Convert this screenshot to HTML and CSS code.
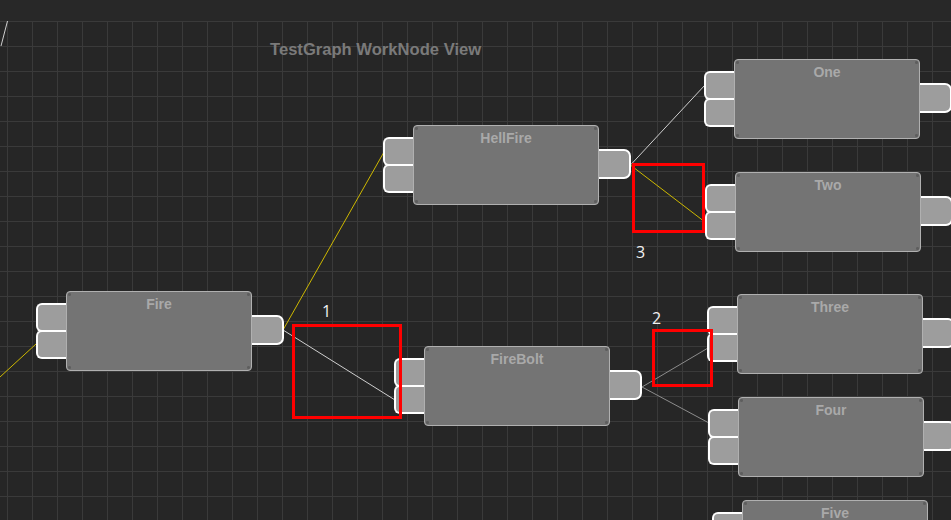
FILE: index.html
```html
<!DOCTYPE html>
<html>
<head>
<meta charset="utf-8">
<link rel="stylesheet" href="styles.css">
</head>
<body>
<div class="topbar"></div>
<div class="canvas">
  <div class="graph-title">TestGraph WorkNode View</div>
  <svg class="wires" width="951" height="499" viewBox="0 0 951 499">
    <line class="w-white" x1="1" y1="25" x2="7.5" y2="0"/>
    <line class="w-yellow" x1="0" y1="356" x2="36" y2="323"/>
    <line class="w-yellow" x1="283" y1="309" x2="384" y2="131"/>
    <line class="w-white" x1="283" y1="309" x2="395" y2="379"/>
    <line class="w-white" x1="631" y1="143.5" x2="705" y2="64"/>
    <line class="w-yellow" x1="631" y1="144.5" x2="705" y2="201"/>
    <line class="w-grey" x1="642" y1="366" x2="708" y2="327"/>
    <line class="w-grey" x1="642" y1="366" x2="709" y2="402"/>
  </svg>

  <div class="node" style="left:36px;top:270px">
    <div class="inputs"><div class="port in"></div><div class="port in"></div></div>
    <div class="body"><span class="title">Fire</span></div>
    <div class="port out"></div>
  </div>
  <div class="node" style="left:383px;top:104px">
    <div class="inputs"><div class="port in"></div><div class="port in"></div></div>
    <div class="body"><span class="title">HellFire</span></div>
    <div class="port out"></div>
  </div>
  <div class="node" style="left:704px;top:38px">
    <div class="inputs"><div class="port in"></div><div class="port in"></div></div>
    <div class="body"><span class="title">One</span></div>
    <div class="port out"></div>
  </div>
  <div class="node" style="left:705px;top:151px">
    <div class="inputs"><div class="port in"></div><div class="port in"></div></div>
    <div class="body"><span class="title">Two</span></div>
    <div class="port out"></div>
  </div>
  <div class="node" style="left:394px;top:325px">
    <div class="inputs"><div class="port in"></div><div class="port in"></div></div>
    <div class="body"><span class="title">FireBolt</span></div>
    <div class="port out"></div>
  </div>
  <div class="node" style="left:707px;top:273px">
    <div class="inputs"><div class="port in"></div><div class="port in"></div></div>
    <div class="body"><span class="title">Three</span></div>
    <div class="port out"></div>
  </div>
  <div class="node" style="left:708px;top:376px">
    <div class="inputs"><div class="port in"></div><div class="port in"></div></div>
    <div class="body"><span class="title">Four</span></div>
    <div class="port out"></div>
  </div>
  <div class="node" style="left:712px;top:479px">
    <div class="inputs"><div class="port in"></div><div class="port in"></div></div>
    <div class="body"><span class="title">Five</span></div>
    <div class="port out"></div>
  </div>

  <div class="mark" style="left:292px;top:303px;width:110px;height:95px"></div>
  <div class="mark-label" style="left:322px;top:280px">1</div>
  <div class="mark" style="left:652px;top:308px;width:61px;height:58px"></div>
  <div class="mark-label" style="left:652px;top:287px">2</div>
  <div class="mark" style="left:632px;top:142px;width:73px;height:70px"></div>
  <div class="mark-label" style="left:636px;top:221px">3</div>
</div>
</body>
</html>
```

FILE: styles.css
```css
html, body {
  margin: 0;
  padding: 0;
  background: #262626;
  overflow: hidden;
}
body {
  width: 951px;
  height: 520px;
  font-family: "Liberation Sans", Arial, sans-serif;
}
.topbar {
  height: 21px;
  background: #282828;
}
.canvas {
  position: relative;
  height: 499px;
  overflow: hidden;
  background-color: #262626;
  background-image:
    linear-gradient(to right, #3a3a3a 1px, transparent 1px),
    linear-gradient(to bottom, #3a3a3a 1px, transparent 1px);
  background-size: 25px 25px;
  background-position: 7px 0;
}
.graph-title {
  position: absolute;
  left: 270px;
  top: 19px;
  font-size: 16.6px;
  font-weight: bold;
  color: #7a7a7a;
  line-height: 20px;
}
.wires {
  position: absolute;
  left: 0;
  top: 0;
}
.wires line {
  stroke-width: 1;
  fill: none;
}
.w-yellow { stroke: #cdb800; }
.w-white { stroke: #cfcfcf; }
.w-grey { stroke: #8c8c8c; }

.node {
  position: absolute;
  display: flex;
  align-items: flex-start;
}
.inputs {
  display: flex;
  flex-direction: column;
  margin-top: 12px;
  margin-right: -3px;
}
.port {
  box-sizing: border-box;
  background: #9d9d9d;
  border: 2px solid #ffffff;
}
.port.in {
  width: 33px;
  height: 29px;
  border-right: none;
  border-radius: 6px 0 0 6px;
}
.port.in + .port.in {
  margin-top: -2px;
}
.port.out {
  width: 34px;
  height: 30px;
  margin-top: 24px;
  margin-left: -2px;
  border-left: none;
  border-radius: 0 7px 7px 0;
}
.body {
  position: relative;
  z-index: 1;
  box-sizing: border-box;
  width: 186px;
  height: 80px;
  background-color: #747474;
  background-image:
    radial-gradient(circle at 2.5px 2.5px, #5e5e5e 1.2px, transparent 1.8px),
    radial-gradient(circle at calc(100% - 2.5px) 2.5px, #5e5e5e 1.2px, transparent 1.8px),
    radial-gradient(circle at 2.5px calc(100% - 2.5px), #5e5e5e 1.2px, transparent 1.8px),
    radial-gradient(circle at calc(100% - 2.5px) calc(100% - 2.5px), #5e5e5e 1.2px, transparent 1.8px);
  border: 1px solid #b0b0b0;
  border-radius: 4px;
  display: flex;
  justify-content: center;
  padding-top: 4px;
}
.title {
  font-size: 14px;
  font-weight: bold;
  color: #a9a9a9;
  line-height: 16px;
}
.mark {
  position: absolute;
  box-sizing: border-box;
  border: 3px solid #ff0000;
}
.mark-label {
  position: absolute;
  font-family: "Open Sans", sans-serif;
  font-size: 16px;
  line-height: 20px;
  color: #f2f2f2;
}
```
